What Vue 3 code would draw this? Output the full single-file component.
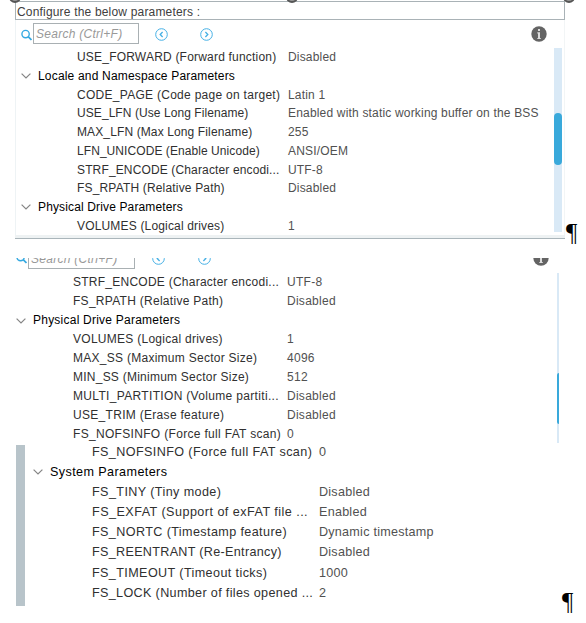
<script setup>
// `t` is the letter tracking of a row's label, in pixels
const first = [
  { name: 'USE_FORWARD (Forward function)', value: 'Disabled', t: 0.2 },
  { group: 'Locale and Namespace Parameters', t: 0.18 },
  { name: 'CODE_PAGE (Code page on target)', value: 'Latin 1', t: 0.28 },
  { name: 'USE_LFN (Use Long Filename)', value: 'Enabled with static working buffer on the BSS', t: 0.07 },
  { name: 'MAX_LFN (Max Long Filename)', value: '255', t: 0.12 },
  { name: 'LFN_UNICODE (Enable Unicode)', value: 'ANSI/OEM', t: 0.07 },
  { name: 'STRF_ENCODE (Character encodi...', value: 'UTF-8', t: 0.14 },
  { name: 'FS_RPATH (Relative Path)', value: 'Disabled', t: 0.17 },
  { group: 'Physical Drive Parameters', t: 0.14 },
  { name: 'VOLUMES (Logical drives)', value: '1', t: 0.17 },
]
const second = [
  { name: 'STRF_ENCODE (Character encodi...', value: 'UTF-8', t: 0.25 },
  { name: 'FS_RPATH (Relative Path)', value: 'Disabled', t: 0.28 },
  { group: 'Physical Drive Parameters', t: 0.23 },
  { name: 'VOLUMES (Logical drives)', value: '1', t: 0.27 },
  { name: 'MAX_SS (Maximum Sector Size)', value: '4096', t: 0.27 },
  { name: 'MIN_SS (Minimum Sector Size)', value: '512', t: 0.24 },
  { name: 'MULTI_PARTITION (Volume partiti...', value: 'Disabled', t: 0.33 },
  { name: 'USE_TRIM (Erase feature)', value: 'Disabled', t: 0.3 },
  { name: 'FS_NOFSINFO (Force full FAT scan)', value: '0', t: 0.32 },
]
const third = [
  { name: 'FS_NOFSINFO (Force full FAT scan)', value: '0', t: 0.39 },
  { group: 'System Parameters', t: 0.4 },
  { name: 'FS_TINY (Tiny mode)', value: 'Disabled', t: 0.4 },
  { name: 'FS_EXFAT (Support of exFAT file ...', value: 'Enabled', t: 0.46 },
  { name: 'FS_NORTC (Timestamp feature)', value: 'Dynamic timestamp', t: 0.39 },
  { name: 'FS_REENTRANT (Re-Entrancy)', value: 'Disabled', t: 0.31 },
  { name: 'FS_TIMEOUT (Timeout ticks)', value: '1000', t: 0.39 },
  { name: 'FS_LOCK (Number of files opened ...', value: '2', t: 0.34 },
]
const panels = [
  { id: 'one', rows: first, toolbar: true, mark: true },
  { id: 'two', rows: second, toolbar: true, mark: false },
  { id: 'three', rows: third, toolbar: false, mark: true },
]
</script>

<template>
  <main class="page">
    <section v-for="p in panels" :key="p.id" class="strip" :class="p.id">
      <div class="panel">
        <template v-if="p.id === 'one'">
          <header class="title">Configure the below parameters :</header>
          <i class="handle left"></i><i class="handle mid"></i><i class="handle right"></i>
        </template>
        <div v-if="p.toolbar" class="toolbar">
          <svg class="search-icon" viewBox="0 0 12 12" fill="none" stroke="#35a9e1">
            <circle cx="5" cy="5" r="4" stroke-width="1.5" /><path d="M7.8 7.8 11.4 11.4" stroke-width="1.9" />
          </svg>
          <div class="search">Search (Ctrl+F)</div>
          <svg class="nav prev" viewBox="0 0 13 13" fill="none" stroke="#45b0e5">
            <circle cx="6.5" cy="6.5" r="5.8" /><path d="M7.6 4 5.2 6.5 7.6 9" stroke-width="1.3" />
          </svg>
          <svg class="nav next" viewBox="0 0 13 13" fill="none" stroke="#45b0e5">
            <circle cx="6.5" cy="6.5" r="5.8" /><path d="M5.4 4 7.8 6.5 5.4 9" stroke-width="1.3" />
          </svg>
          <svg class="info" viewBox="0 0 16 16">
            <circle cx="8" cy="8" r="7.7" fill="#646464" />
            <path d="M7 3h2v2H7zM6.3 6.3H9V12h.8v1H6.3v-1H7V7.4h-.7z" fill="#dcdcdc" />
          </svg>
        </div>
        <div class="body">
          <div class="rows">
            <div v-for="(r, i) in p.rows" :key="i" class="row" :class="{ head: r.group }">
              <template v-if="r.group">
                <svg class="chevron" viewBox="0 0 10 6" fill="none" stroke="#858585" stroke-width="1.2"><path d="M.6.6 5 5 9.4.6" /></svg>
                <span class="group" :style="{ letterSpacing: r.t + 'px' }">{{ r.group }}</span>
              </template>
              <template v-else>
                <span class="name" :style="{ letterSpacing: r.t + 'px' }">{{ r.name }}</span><span class="value">{{ r.value }}</span>
              </template>
            </div>
          </div>
          <div v-if="p.toolbar" class="track"><div class="thumb"></div></div>
        </div>
      </div>
      <span v-if="p.mark" class="mark">¶</span>
    </section>
  </main>
</template>

<style>
body { background: #fff; }
</style>

<style scoped>
.page { width: 586px; height: 623px; overflow: hidden; font-family: "Liberation Sans", Arial, sans-serif; font-size: 12px; color: #303030; }
.page * { box-sizing: border-box; }
.strip { display: flex; white-space: pre; }
.panel { position: relative; flex: none; display: flex; flex-direction: column; }
.one { height: 258px; letter-spacing: .18px; }
.one .panel { width: 550px; height: 239px; margin-left: 15px; border-bottom: 1px solid #aab5ba; box-shadow: inset 0 -3px #eef2f3, inset 1px 0 #eef3f5, inset -1px 0 #f2f5f6; padding-top: 1px; }
.handle { position: absolute; top: -9px; width: 12px; height: 12px; border: 2px solid #555; border-radius: 50%; background: #999; }
.handle.left { left: -6px; }
.handle.mid { left: 271px; }
.handle.right { left: 548px; }
.title { height: 19px; border: 1px solid #a9b2b6; background: #fff; padding-left: 1px; line-height: 20px; color: #404040; letter-spacing: .18px; }
.toolbar { display: flex; flex: none; }
.one .toolbar { height: 28px; padding: 3px 0 0 6px; }
.search-icon { width: 11px; height: 12px; margin-top: 6px; }
.search { width: 106px; height: 21px; margin-left: 1px; border: 1px solid #a9b0b3; padding-left: 2px; line-height: 21px; font-style: italic; color: #999; letter-spacing: .27px; }
.nav { width: 13px; height: 13px; margin: 5px 0 0 16px; }
.nav.next { margin-left: 32px; }
.info { width: 16px; height: 16px; margin: 3px 0 0 318px; }
.body { display: flex; flex: 1; }
.row { height: var(--pitch); line-height: var(--pitch); display: flex; align-items: center; }
.name { flex: none; width: var(--name); }
.value { color: #515151; }
.head { color: #000; }
.chevron { width: 10px; height: 6px; flex: none; margin-left: var(--chev); margin-right: var(--gap); }
.one .rows { --pitch: 18.75px; --name: 211px; --chev: 6px; --gap: 7px; width: 539px; }
.one .row:not(.head) { padding-left: 62px; }
.track { background: #d9e9f6; }
.one .track { width: 8px; height: 184px; padding-top: 65px; }
.thumb { background: #39a9db; border-radius: 4px; }
.one .thumb { height: 52px; }
.mark { font: 25px/27px "Liberation Serif", serif; color: #000; }
.one .mark { margin: 219px 0 0 1px; }
.two { height: 187px; letter-spacing: .27px; }
.two .panel { width: 560px; height: 185px; overflow: hidden; }
.two .toolbar { height: 15px; padding: 0 0 4px 16px; align-items: flex-end; }
.two .search { flex: none; width: 107px; }
.two .search-icon { margin: 0 0 5px; flex: none; }
.two .nav { margin: 0 0 4px 17px; flex: none; }
.two .nav.next { margin-left: 33px; }
.two .info { margin: 0 0 3px 322px; flex: none; }
.two .rows { --pitch: 19.05px; --name: 214px; --chev: 16px; --gap: 7px; width: 557px; }
.two .row:not(.head) { padding-left: 73px; }
.two .track { width: 2px; height: 170px; padding-top: 100px; }
.two .thumb { height: 51px; border-radius: 2px 0 0 2px; }
.three { height: 178px; font-size: 12.6px; letter-spacing: .24px; }
.three .panel { width: 562px; height: 161px; margin-left: 16px; border-left: 9px solid #b8c4ca; }
.three .rows { --pitch: 20.1px; --name: 227px; --chev: 8px; --gap: 7px; margin-top: -3px; }
.three .row:not(.head) { padding-left: 67px; }
.three .mark { margin: 143px 0 0 -16px; }
</style>
